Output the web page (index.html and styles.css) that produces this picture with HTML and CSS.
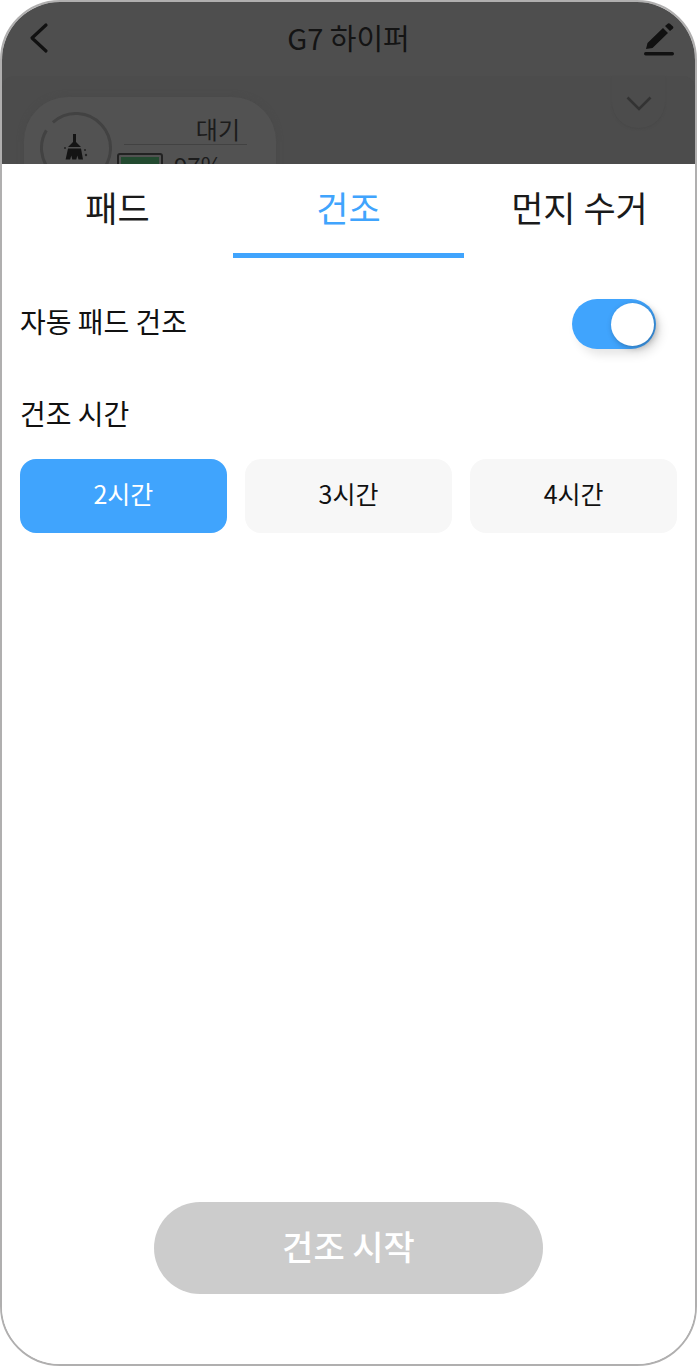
FILE: index.html
```html
<!DOCTYPE html>
<html>
  <head>
    <meta charset="UTF-8">
    <title>G7 하이퍼</title>
    <link rel="stylesheet" href="styles.css">
  </head>
  <body>
    <div class="phone">
      <div class="backdrop">
        <div class="topbar">
          <svg class="back-icon" width="22" height="32" viewBox="0 0 22 32"><path d="M18 3 L4 16 L18 29" fill="none" stroke="#111" stroke-width="3.2" stroke-linecap="round" stroke-linejoin="round"/></svg>
          <div class="title">G7 하이퍼</div>
          <svg class="edit-icon" width="32" height="34" viewBox="0 0 32 34"><path d="M2 27 L3.5 21 L19 6 L24 11 L8.5 26 Z M21 4 L24 1.5 Q25 1 26 1.7 L29 4.6 Q29.8 5.6 29 6.6 L26 9 Z" fill="#111"/><rect x="0" y="30" width="30" height="3.4" rx="1.7" fill="#111"/></svg>
        </div>
        <div class="panel">
          <div class="status-card">
            <div class="ring">
              <svg width="72" height="72" viewBox="0 0 72 72">
                <circle cx="36" cy="36" r="34.5" fill="none" stroke="#424242" stroke-width="3" stroke-dasharray="206 11" transform="rotate(-132 36 36)"/>
                <path d="M33 22 h3 v8 l5 5 h-13 l5 -5 Z" fill="#141414"/>
                <path d="M28 36.5 h13 l2 11 h-4.5 l-1.2 -4 l-1 4 h-4 l-1 -4 l-1.2 4 h-4.5 Z" fill="#141414"/>
                <circle cx="25" cy="36" r="1" fill="#222"/>
                <circle cx="45" cy="38" r="1" fill="#222"/>
                <circle cx="46" cy="43" r="1.2" fill="#222"/>
              </svg>
            </div>
            <div class="status-info">
              <div class="status-label">대기</div>
              <div class="battery-row">
                <div class="battery"><div class="battery-level"></div></div>
                <span class="battery-text">97%</span>
              </div>
            </div>
          </div>
          <div class="expand-tab">
            <svg width="26" height="15" viewBox="0 0 26 15"><path d="M1.5 1.5 L13 13 L24.5 1.5" fill="none" stroke="#333" stroke-width="2.6"/></svg>
          </div>
        </div>
      </div>

      <div class="sheet">
        <div class="tabs">
          <div class="tab">패드</div>
          <div class="tab active">건조</div>
          <div class="tab">먼지 수거</div>
        </div>
        <div class="setting-row">
          <span class="setting-label">자동 패드 건조</span>
          <div class="toggle"><div class="knob"></div></div>
        </div>
        <div class="setting-label time-label">건조 시간</div>
        <div class="options">
          <div class="option selected">2시간</div>
          <div class="option">3시간</div>
          <div class="option">4시간</div>
        </div>
        <div class="start-btn">건조 시작</div>
      </div>
    </div>
  </body>
</html>
```

FILE: styles.css
```css
html, body {
	margin: 0;
	padding: 0;
	background: #fff;
}
body {
	font-family: "Noto Sans CJK KR", "Noto Sans", sans-serif;
	color: #111;
}
.phone {
	box-sizing: border-box;
	width: 697px;
	height: 1366px;
	border: 2px solid #b0afaf;
	border-radius: 60px;
	overflow: hidden;
	display: flex;
	flex-direction: column;
	background: #fff;
}
.backdrop {
	height: 162px;
	flex: none;
	overflow: hidden;
	background: #4e4e4e;
}
.topbar {
	height: 74px;
	padding: 0 19px;
	display: grid;
	grid-template-columns: 1fr auto 1fr;
	align-items: center;
}
.back-icon {
	margin: 0 0 2px 7px;
}
.edit-icon {
	margin-bottom: 1px;
	justify-self: end;
}
.title {
	font-size: 29px;
	line-height: 70px;
	height: 74px;
	color: #141414;
}
.panel {
	height: 88px;
	background: #4c4c4c;
	border-radius: 12px 12px 0 0;
	padding: 21px 0 0 22px;
	box-sizing: border-box;
	position: relative;
}
.status-card {
	width: 252px;
	height: 130px;
	box-sizing: border-box;
	border-radius: 44px;
	background: #525252;
	box-shadow: 0 0 6px #4a4a4a;
	padding: 15px 29px 0 16px;
	display: flex;
}
.ring {
	width: 72px;
	height: 72px;
	flex: none;
}
.status-info {
	flex: 1;
	margin-left: 5px;
}
.status-label {
	font-size: 24px;
	line-height: 34px;
	height: 32px;
	text-align: right;
	color: #1c1c1c;
	border-bottom: 1px solid #424242;
	margin-left: 7px;
	padding-right: 7px;
}
.battery-row {
	display: flex;
	align-items: flex-start;
	margin-top: 8px;
}
.battery {
	box-sizing: border-box;
	width: 46px;
	height: 26px;
	border: 2px solid #222;
	border-radius: 3px;
	padding: 2px;
	flex: none;
}
.battery-level {
	height: 100%;
	background: #234a30;
}
.battery-text {
	font-size: 24px;
	line-height: 24px;
	margin-left: 11px;
	color: #1c1c1c;
}
.expand-tab {
	position: absolute;
	top: 0;
	right: 30px;
	width: 53px;
	height: 52px;
	border-radius: 0 0 26px 26px;
	background: #4c4c4c;
	box-shadow: 0 1px 2px #484848;
	display: flex;
	align-items: center;
	justify-content: center;
	padding-top: 3px;
	box-sizing: border-box;
}
.sheet {
	flex: 1;
	background: #fff;
	border-radius: 16px 16px 0 0;
	display: flex;
	flex-direction: column;
	min-height: 0;
}
.tabs {
	display: flex;
	flex: none;
}
.tab {
	flex: 1;
	height: 94px;
	box-sizing: border-box;
	text-align: center;
	font-size: 35px;
	line-height: 86px;
	color: #1a1a1a;
}
.tab.active {
	color: #40a4fd;
	border-bottom: 5px solid #40a4fd;
}
.setting-row {
	display: flex;
	justify-content: space-between;
	align-items: center;
	padding: 41px 39px 0 18px;
	height: 50px;
}
.setting-label {
	font-size: 28px;
	line-height: 40px;
	color: #111;
	position: relative;
	top: -3px;
}
.time-label {
	padding-left: 18px;
	margin-top: 44px;
	top: 0;
}
.toggle {
	width: 84px;
	height: 50px;
	border-radius: 25px;
	background: #40a4fd;
	display: flex;
	align-items: center;
	justify-content: flex-end;
	padding-right: 2px;
	box-sizing: border-box;
	box-shadow: 5px 6px 10px rgba(0, 0, 0, 0.1);
}
.knob {
	width: 43px;
	height: 43px;
	border-radius: 50%;
	background: #fff;
	box-shadow: 2px 2px 6px rgba(0, 0, 0, 0.3);
}
.options {
	display: flex;
	gap: 18.5px;
	padding: 0 18px;
	margin-top: 26px;
}
.option {
	flex: 1;
	height: 74px;
	border-radius: 16px;
	background: #f7f7f7;
	text-align: center;
	font-size: 25px;
	line-height: 68px;
	color: #111;
}
.option.selected {
	background: #40a4fd;
	color: #fff;
}
.start-btn {
	margin: auto auto 70px;
	width: 389px;
	height: 92px;
	border-radius: 46px;
	background: #ccc;
	color: #fff;
	text-align: center;
	font-size: 34px;
	font-weight: 500;
	line-height: 88px;
}
```
